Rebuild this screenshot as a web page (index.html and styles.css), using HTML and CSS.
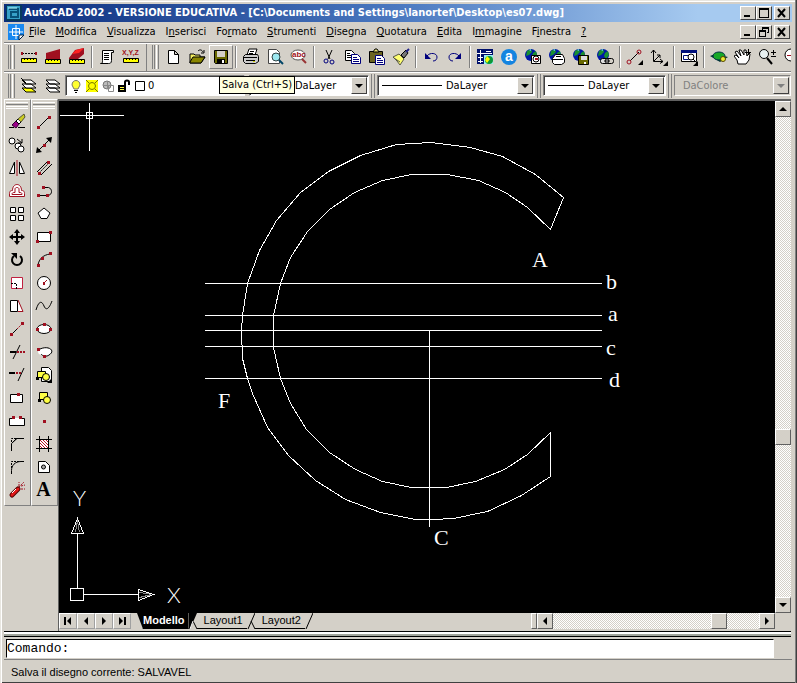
FILE: index.html
```html
<!DOCTYPE html>
<html lang="it">
<head>
<meta charset="utf-8">
<title>AutoCAD 2002</title>
<link rel="stylesheet" href="styles.css">
</head>
<body>
<svg class="defs" aria-hidden="true">
  <symbol id="globe" viewBox="0 0 18 18"><circle cx="7" cy="7" r="6" fill="#0018a8"/><path d="M3 3l4-2 1 3-3 3-3 1zM9 5l3-2 1 4-3 4-2-3z" fill="#189030"/><path d="M5 2l2-1v2z" fill="#6cf"/></symbol>
  <symbol id="arrow" viewBox="0 0 8 8"><path d="M0 2h8L4 6z"/></symbol>
</svg>
<div class="window">
  <header class="titlebar">
    <svg class="appicon" viewBox="0 0 16 16"><path fill="#063a5c" d="M0 0h16v16H0z"/><path fill="#38a0c8" d="M1 1h13v13H1z"/><path d="M3 4h9v9M11 7H5v5h7" fill="none" stroke="#075078" stroke-width="2"/><path d="M2 3h9" stroke="#bff"/></svg>
    <h1>AutoCAD 2002 - VERSIONE EDUCATIVA - [C:\Documents and Settings\lanortef\Desktop\es07.dwg]</h1>
    <div class="winbtns">
      <button aria-label="Riduci a icona"><svg viewBox="0 0 12 10"><path d="M2 7h6v2H2z"/></svg></button>
      <button aria-label="Ingrandisci"><svg viewBox="0 0 12 10"><path d="M1 0h10v10H1zM2 2v7h8V2z" fill-rule="evenodd"/></svg></button>
      <button class="close" aria-label="Chiudi"><svg viewBox="0 0 12 10"><path class="x" d="M2 1l7 8M9 1L2 9"/></svg></button>
    </div>
  </header>

  <nav class="menubar">
    <svg class="docicon" viewBox="0 0 16 16"><path fill="#1888f0" d="M0 0h16v11l-5 5H0z"/><path d="M8 1v14M1 8h14M4.500 4.500h7v7h-7z" fill="none" stroke="#fff"/><path d="M11 16v-5h5z" fill="#fff" stroke="#024"/></svg>
    <button><u>F</u>ile</button><button><u>M</u>odifica</button><button><u>V</u>isualizza</button><button>I<u>n</u>serisci</button><button>Fo<u>r</u>mato</button><button><u>S</u>trumenti</button><button><u>D</u>isegna</button><button><u>Q</u>uotatura</button><button><u>E</u>dita</button><button>I<u>m</u>magine</button><button>F<u>i</u>nestra</button><button><u>?</u></button>
    <div class="winbtns">
      <button aria-label="Riduci disegno"><svg viewBox="0 0 12 10"><path d="M2 7h6v2H2z"/></svg></button>
      <button aria-label="Ripristina disegno"><svg viewBox="0 0 12 10"><path d="M4 0h7v6H9V5h1V2H5v1H4zM1 3h7v7H1zM2 5v4h5V5z" fill-rule="evenodd"/></svg></button>
      <button class="close" aria-label="Chiudi disegno"><svg viewBox="0 0 12 10"><path class="x" d="M2 1l7 8M9 1L2 9"/></svg></button>
    </div>
  </nav>

  <div class="row">
    <div class="bar">
      <i class="grip"></i>
      <button aria-label="Distanza"><svg viewBox="0 0 18 18"><path class="k dot" d="M2 5.500h14"/><path class="fr" d="M1 4h2v3H1zM15 4h2v3h-2z"/><path class="fy" d="M1.500 10.500h15v4h-15z"/><path class="k" d="M4.500 10v2M7.500 10v2M10.500 10v2M13.500 10v2"/></svg></button>
      <button aria-label="Area"><svg viewBox="0 0 18 18"><path class="fr" d="M2 5l14-4v10H2z"/><path class="fy" d="M1.500 11.500h15v4h-15z"/><path class="k" d="M4.500 11v2M7.500 11v2M10.500 11v2M13.500 11v2"/></svg></button>
      <button aria-label="Proprietà di massa"><svg viewBox="0 0 18 18"><path class="fr" d="M1 10l6-8 9-2v6l-6 5H1z"/><path fill="#f22" d="M4 6l4-4 8-2-5 5z"/><path class="fy" d="M1.500 11.500h15v4h-15z"/><path class="k" d="M4.500 11v2M7.500 11v2M10.500 11v2M13.500 11v2"/></svg></button>
      <i class="sep"></i>
      <button aria-label="Lista"><svg viewBox="0 0 18 18"><path class="fw" d="M4.500 2.500h11v2h-2v8c0 3-2 3-3 3h-8c2 0 2-1 2-3z"/><path class="k" d="M6 5.500h5M6 7.500h5M6 9.500h5M6 11.500h5"/></svg></button>
      <button aria-label="Identifica punto"><svg viewBox="0 0 18 18"><text x="0" y="7" class="xyz">X,Y,Z</text><path class="fy" d="M1.500 10.500h15v4h-15z"/><path class="k" d="M4.500 10v2M7.500 10v2M10.500 10v2M13.500 10v2"/></svg></button>
    </div>
    <div class="bar rest">
      <i class="grip"></i>
      <button aria-label="Nuovo"><svg viewBox="0 0 18 18"><path class="fw" d="M4.500 2.500h6l4 4v9h-10zM10.500 2.500v4h4"/></svg></button>
      <button aria-label="Apri"><svg viewBox="0 0 18 18"><path fill="#f4ee60" stroke="#000" d="M2 14V6h4l1 1h5v2h5l-4 6H2z"/><path fill="#8a8600" stroke="#000" d="M2 14l3-5h12l-4 6H2z"/><path class="k" d="M10 3c2-2 4-1 5 1M13 5h3V2"/></svg></button>
      <div class="tipwrap">
        <button class="active" aria-label="Salva" aria-describedby="tip"><svg viewBox="0 0 18 18"><path fill="#686800" stroke="#000" d="M2.500 2.500h13v13h-12l-1-1z"/><path fill="#d4d0c8" d="M5 3h8v6H5z"/><path fill="#000" d="M5 11h8v5H5z"/><path fill="#fff" d="M10 12h2v3h-2z"/></svg></button>
        <div class="tip" id="tip" role="tooltip">Salva (Ctrl+S)</div>
      </div>
      <i class="sep"></i>
      <button aria-label="Stampa"><svg viewBox="0 0 18 18"><path class="fw" d="M5 7l2-6h8l-2 6z"/><path fill="#ccc" stroke="#000" d="M1.500 8.500l2-2h12l1 2v5l-3 2h-10l-2-2z"/><path class="k" d="M2 9.500h13M4 12.500h9M8 3.500h4M7 5.500h4"/><path d="M11 13h2v1h-2z" fill="#cc0"/></svg></button>
      <button aria-label="Anteprima di stampa"><svg viewBox="0 0 18 18"><path fill="#fff" stroke="#444" d="M2.500 1.500h8l3 3v11h-11z"/><circle cx="10" cy="9" r="4" fill="#9de8f0" stroke="#344"/><path d="M13 12l4 4" stroke="#046" stroke-width="2"/></svg></button>
      <button aria-label="Trova e sostituisci"><svg viewBox="0 0 18 18"><ellipse cx="8" cy="7" rx="7" ry="5" fill="#fff" stroke="#555"/><text x="2" y="9" class="abc">abc</text><path d="M12 11l4 4" stroke="#933" stroke-width="2"/></svg></button>
      <i class="sep"></i>
      <button aria-label="Taglia"><svg viewBox="0 0 18 18"><path class="k" d="M6 2l4 9M12 2l-4 9"/><circle class="n" cx="6" cy="13" r="2"/><circle class="n" cx="12" cy="14" r="2"/></svg></button>
      <button aria-label="Copia"><svg viewBox="0 0 18 18"><path class="fw" d="M1.500 2.500h6l3 3v7h-9z"/><path fill="#fff" stroke="#00007c" d="M7.500 6.500h6l3 3v6h-9z"/><path class="k" d="M3 5.500h3M3 7.500h4M3 9.500h4"/><path class="n" d="M9 9.500h4M9 11.500h6M9 13.500h6"/></svg></button>
      <button aria-label="Incolla"><svg viewBox="0 0 18 18"><path fill="#6c6420" stroke="#000" d="M1.500 3.500h13v11h-13z"/><path fill="#e8e070" stroke="#000" d="M5 4l2-3h2l2 3z"/><path fill="#fff" stroke="#00007c" d="M7.500 7.500h6l3 3v6h-9z"/><path class="n" d="M9 10.500h4M9 12.500h6M9 14.500h6"/></svg></button>
      <button aria-label="Corrispondenza proprietà"><svg viewBox="0 0 18 18"><path fill="#ffff70" stroke="#554" d="M1 9l6-3 5 5-4 6-3-4z"/><path d="M2 10l6 4" stroke="#554"/><path d="M9 7l3 3 4-5-2-3z" fill="#777" stroke="#000"/><path d="M14 4l3-3" stroke="#228" stroke-width="2"/></svg></button>
      <i class="sep"></i>
      <button aria-label="Annulla"><svg viewBox="0 0 18 18"><path class="n" d="M5 8c3-4 10-3 10 1 0 2-1 4-4 4"/><path fill="#00007c" d="M3 5v6h6z"/></svg></button>
      <button aria-label="Ripristina"><svg viewBox="0 0 18 18"><path class="n" d="M13 8C10 4 3 5 3 9c0 2 1 4 4 4"/><path fill="#00007c" d="M15 5v6H9z"/></svg></button>
      <i class="sep"></i>
      <button aria-label="Oggi"><svg viewBox="0 0 18 18"><path fill="#00106c" d="M1 1h16v6H1zM1 1h7v15H1z"/><path d="M1 5.500h15M4.500 2v13M10 3.500h5M2 9.500h5M2 13.500h5" stroke="#fff" fill="none"/><path fill="#9cf0f8" d="M8 7h9v9H8z"/><circle cx="13" cy="12" r="4" fill="#0a9838"/><path fill="#ff0" d="M11 8l3 3-3 4-2-3z"/></svg></button>
      <button aria-label="Autodesk Point A"><svg viewBox="0 0 18 18"><circle cx="9" cy="9" r="8" fill="#1484e0"/><text x="5" y="13" class="pa">a</text></svg></button>
      <button aria-label="Meet Now"><svg viewBox="0 0 18 18"><use href="#globe"/><path class="fw" d="M7.500 7.500h9v8h-9z"/><circle class="k" cx="12" cy="11" r="3"/><path class="fr" d="M11 10h3v2h-3z"/></svg></button>
      <button aria-label="Pubblica sul Web"><svg viewBox="0 0 18 18"><use href="#globe"/><path fill="#fff" stroke="#000" d="M4.500 10.500l3-4h7l2 4v4l-3 2h-7l-2-2zM5 11.500h10M8 8.500h5"/></svg></button>
      <button aria-label="eTransmit"><svg viewBox="0 0 18 18"><use href="#globe"/><path fill="#686800" stroke="#000" d="M6.500 7.500h10v9h-10z"/><path fill="#ddd" d="M9 8h6v4H9z"/><path fill="#fff" d="M12 14h2v2h-2z"/></svg></button>
      <button aria-label="Inserisci collegamento"><svg viewBox="0 0 18 18"><use href="#globe"/><rect x="4.500" y="10.500" width="8" height="5" rx="2" fill="#ddd" stroke="#000"/><rect x="9.500" y="10.500" width="8" height="5" rx="2" fill="none" stroke="#000"/><path class="k" d="M8 13h6"/></svg></button>
      <i class="sep"></i>
      <button aria-label="Punto di riferimento temporaneo"><svg viewBox="0 0 18 18"><path class="k" d="M4 13l9-9"/><circle class="r" cx="3" cy="14" r="2"/><circle class="r" cx="13" cy="4" r="2"/><path d="M17 12v5h-5z"/></svg></button>
      <button aria-label="UCS"><svg viewBox="0 0 18 18"><path class="k" d="M3.500 2v11.500H13M4 13l6-6M1 5l2.500-3L6 5M10 11l3 2.500-3 2M7 7h3v3"/><path d="M18 13v5h-5z"/></svg></button>
      <i class="sep"></i>
      <button aria-label="Viste"><svg viewBox="0 0 18 18"><path class="fw" d="M1.500 2.500h15v11h-15z"/><path fill="#00107c" d="M1 2h16v3H1z"/><path d="M3.500 7.500h5v4h-5z" fill="#fff" stroke="#00107c"/><circle cx="11" cy="9" r="3" fill="#fff" stroke="#000"/><path class="k" d="M13 11l4 4"/><path d="M18 13v5h-5z"/></svg></button>
      <i class="sep"></i>
      <button aria-label="Orbita 3D"><svg viewBox="0 0 18 18"><path fill="#033" d="M0 8l5-2 13 3-8 5z"/><ellipse cx="9" cy="8" rx="6" ry="4" fill="#18a828" stroke="#034"/><circle cx="13" cy="11" r="2.500" fill="#ee3" stroke="#540"/></svg></button>
      <button aria-label="Pan in tempo reale"><svg viewBox="0 0 18 18"><path class="fw" d="M4 16l-1-4-3-4 2-1 3 3-4-6 2-1 4 5-2-6h2l3 5V2h2l1 6 2-3 1 1-1 6-3 4z"/><path class="k" d="M14.500 1v6M11 4.500h6"/></svg></button>
      <button aria-label="Zoom in tempo reale"><svg viewBox="0 0 18 18"><circle cx="6" cy="6" r="4.500" fill="#e8f0f0" stroke="#000"/><path d="M9 10l5 6" stroke="#000" stroke-width="2"/><path class="k" d="M15.500 2v5M13 4.500h5M13 8.500h5"/></svg></button>
      <button aria-label="Zoom finestra"><svg viewBox="0 0 18 18"><circle cx="9" cy="7" r="6" fill="#fff" stroke="#000"/><path class="r" d="M5 7.500h7"/><path d="M10 12l5 5" stroke="#000" stroke-width="2"/></svg></button>
    </div>
  </div>

  <div class="row props">
    <div class="bar">
      <i class="grip"></i>
      <button aria-label="Rendi corrente il layer"><svg viewBox="0 0 18 18"><path fill="#ff0" stroke="#000" d="M2 11h9l5 4H6z"/><path class="fw" d="M2 7h9l5 4H6zM2 3h9l5 4H6z"/><path d="M1 1l5 5" stroke="#000"/></svg></button>
      <button aria-label="Layer"><svg viewBox="0 0 18 18"><path class="fw" d="M2 11h9l5 4H6zM2 7h9l5 4H6zM2 3h9l5 4H6z"/></svg></button>
      <div class="combo layer">
        <select aria-label="Layer corrente"><option>0</option></select>
        <div class="deco">
          <svg viewBox="0 0 12 14"><path fill="#ffff30" stroke="#776" d="M4 10L2 6c0-6 8-6 8 0l-2 4z"/><path class="k" d="M4 11.500h4M5 13.500h2"/></svg>
          <svg viewBox="0 0 12 14"><path fill="#ff0" d="M0 1h12v12H0z"/><circle cx="6" cy="7" r="3.500" fill="#ff0" stroke="#770"/><path d="M0 1l3 3M12 1L9 4M0 13l3-3M12 13l-3-3" stroke="#770"/></svg>
          <svg viewBox="0 0 12 14"><circle cx="5" cy="6" r="4" fill="#bbb" stroke="#777"/><path d="M6.500 6.500h5v6h-5zM1 6.500h8M5.500 2v8" fill="none" stroke="#888"/></svg>
          <svg viewBox="0 0 12 14"><path d="M0 6h8v7H0z"/><path d="M2 8.500h4M2 10.500h4" stroke="#ff4"/><path d="M7 6V3c0-2 4-2 4 0v3" fill="none" stroke="#000" stroke-width="2"/></svg>
          <svg viewBox="0 0 12 14"><path class="fw" d="M1.500 2.500h9v9h-9z"/></svg>
        </div>
        <span class="drop"><svg><use href="#arrow"/></svg></span>
      </div>
      <div class="combo color">
        <select aria-label="Colore"><option>DaLayer</option></select>
        <span class="drop"><svg><use href="#arrow"/></svg></span>
      </div>
    </div>
    <i class="grip"></i>
    <div class="combo ltype">
      <select aria-label="Tipo di linea"><option>DaLayer</option></select>
      <div class="deco"><hr></div>
      <span class="drop"><svg><use href="#arrow"/></svg></span>
    </div>
    <i class="grip"></i>
    <div class="combo lweight">
      <select aria-label="Spessore di linea"><option>DaLayer</option></select>
      <div class="deco"><hr></div>
      <span class="drop"><svg><use href="#arrow"/></svg></span>
    </div>
    <i class="grip"></i>
    <div class="combo pstyle">
      <select aria-label="Stile di stampa" disabled><option>DaColore</option></select>
      <span class="drop"><svg><use href="#arrow"/></svg></span>
    </div>
  </div>

  <main class="main">
    <div class="side">
      <i class="hgrip"></i>
      <button aria-label="Cancella"><svg viewBox="0 0 18 18"><path class="k" d="M1 14.500h5M10 14.500h7"/><path fill="#908" stroke="#303" d="M4 12l4-4 3 3-3 4z"/><path fill="#fff" stroke="#000" d="M8 8l2-2 3 3-2 2z"/><path fill="#cc2" stroke="#553" d="M10 6l6-5 1 3-4 5z"/></svg></button>
      <button aria-label="Copia oggetto"><svg viewBox="0 0 18 18"><circle class="fw" cx="4" cy="5" r="3"/><circle class="fw" cx="10" cy="10" r="3"/><circle class="fw" cx="13" cy="13" r="3"/><path class="k" d="M9 3l5 4M14 3v4h-4"/></svg></button>
      <button aria-label="Specchio"><svg viewBox="0 0 18 18"><path class="fw" d="M6.500 3v11.500h-5zM11.500 3v11.500h5z"/><path class="r" d="M9 1v16"/></svg></button>
      <button aria-label="Offset"><svg viewBox="0 0 18 18"><path d="M1.500 14.500v-3c0-3 2-3 3-3 0-8 9-8 9 0 1 0 3 0 3 3v3z" fill="#fff" stroke="#a01020"/><path class="r" d="M4 12.500c0-2 1-2 3-2V7c0-2 4-2 4 0v3.500c2 0 3 0 3 2z"/></svg></button>
      <button aria-label="Serie"><svg viewBox="0 0 18 18"><path class="fw" d="M2.500 2.500h5v5h-5zM10.500 2.500h5v5h-5zM2.500 10.500h5v5h-5zM10.500 10.500h5v5h-5z"/></svg></button>
      <button aria-label="Sposta"><svg viewBox="0 0 18 18"><path d="M9 3v12M3 9h12" stroke="#000" stroke-width="2"/><path d="M9 1l3 4H6zM9 17l3-4H6zM1 9l4-3v6zM17 9l-4-3v6z"/></svg></button>
      <button aria-label="Ruota"><svg viewBox="0 0 18 18"><path d="M12 5a5 5 0 1 1-6 0" fill="none" stroke="#000" stroke-width="2"/><path d="M3 2h6v6z"/></svg></button>
      <button aria-label="Scala"><svg viewBox="0 0 18 18"><path fill="#fff" stroke="#c02040" d="M3.500 3.500h11v11h-11z"/><path class="k dot" d="M3 9.500h5.500v6"/></svg></button>
      <button aria-label="Stira"><svg viewBox="0 0 18 18"><path fill="#fff" d="M10 4l5 10h-5z"/><path class="r" d="M10 3l5 11.500h-5"/><path class="fw" d="M2.500 3.500h7v11h-7z"/></svg></button>
      <button aria-label="Allunga"><svg viewBox="0 0 18 18"><path class="k" d="M3 15l6-6"/><path class="r dot" d="M9 9l6-6"/><path class="fr" d="M2 13h3v3H2zM13 2h3v3h-3z"/></svg></button>
      <button aria-label="Taglia oggetto"><svg viewBox="0 0 18 18"><path d="M2 9h6" stroke="#000" stroke-width="2"/><path class="k" d="M12 2L5 16"/><path class="r dot" stroke-width="2" d="M9 9h8"/></svg></button>
      <button aria-label="Estendi"><svg viewBox="0 0 18 18"><path d="M1 7h6" stroke="#000" stroke-width="2"/><path class="k" d="M16 2l-6 13"/><path class="r dot" stroke-width="2" d="M8 7h5"/></svg></button>
      <button aria-label="Spezza in un punto"><svg viewBox="0 0 18 18"><path class="fw" d="M2.500 5.500h12v8h-12z"/><path class="fr" d="M9 4h3v3H9z"/></svg></button>
      <button aria-label="Spezza"><svg viewBox="0 0 18 18"><path fill="#fff" d="M2 6h14v8H2z"/><path class="k" d="M5 6.500H1.500v7h15v-7H13"/><path class="fr" d="M4 4h3v3H4zM11 4h3v3h-3z"/></svg></button>
      <button aria-label="Cima"><svg viewBox="0 0 18 18"><path class="k" d="M16 3.500H9l-5.500 5V16M4 8l5-5"/><path class="k dot" d="M3.500 7V3.500H9"/></svg></button>
      <button aria-label="Raccorda"><svg viewBox="0 0 18 18"><path class="k" d="M16 3.500h-3c-6 0-9.500 4-9.500 9V16"/><path class="k dot" d="M3.500 10V3.500H11"/></svg></button>
      <button aria-label="Esplodi"><svg viewBox="0 0 18 18"><path d="M4 14l6-6" stroke="#500" stroke-width="5" stroke-linecap="round"/><path d="M4 14l6-6" stroke="#e01818" stroke-width="3" stroke-linecap="round"/><path d="M4 12l4-4" stroke="#fff"/><path class="r dot" d="M11 6l5-5M11 5V1M13 8h4M13 5l4-1"/></svg></button>
    </div>
    <div class="side">
      <i class="hgrip"></i>
      <button aria-label="Linea"><svg viewBox="0 0 18 18"><path class="k" d="M4 14L14 4"/><path class="fr" d="M2 13h3v3H2zM13 3h3v3h-3z"/></svg></button>
      <button aria-label="Linea di costruzione"><svg viewBox="0 0 18 18"><path class="k" d="M3 15L15 3"/><path d="M1 17l1-6 5 5zM17 1l-1 6-5-5z"/><path class="fr" d="M8 8h3v3H8z"/></svg></button>
      <button aria-label="Multilinea"><svg viewBox="0 0 18 18"><path class="k" d="M2 13L13 2M6 16L17 5"/><path class="k dot" d="M4 14L15 3"/><path class="fr" d="M12 2h3v3h-3zM3 13h3v3H3z"/></svg></button>
      <button aria-label="Polilinea"><svg viewBox="0 0 18 18"><path class="k" d="M3 13.500h9c7 0 5-9 0-8H9"/><path class="fr" d="M2 12h3v3H2zM11 12h3v3h-3zM7 4h3v3H7z"/></svg></button>
      <button aria-label="Poligono"><svg viewBox="0 0 18 18"><path class="fw" d="M9 3l6 5-3 5.500H6L3 8z"/></svg></button>
      <button aria-label="Rettangolo"><svg viewBox="0 0 18 18"><path class="fw" d="M2.500 4.500h13v9h-13z"/><path class="fr" d="M1 12h3v3H1zM14 3h3v3h-3z"/></svg></button>
      <button aria-label="Arco"><svg viewBox="0 0 18 18"><path class="k" d="M3 14C4 8 8 4 15 3"/><path class="fr" d="M2 13h3v3H2zM6 6h3v3H6zM14 1h3v3h-3z"/></svg></button>
      <button aria-label="Cerchio"><svg viewBox="0 0 18 18"><circle class="fw" cx="9" cy="9" r="6.500"/><path class="r" d="M8 10l4-4"/><path class="fr" d="M8 8h2v3H8z"/></svg></button>
      <button aria-label="Spline"><svg viewBox="0 0 18 18"><path class="k" d="M1 13C4 3 7 4 9 9s5 3 8-5"/></svg></button>
      <button aria-label="Ellisse"><svg viewBox="0 0 18 18"><ellipse class="fw" cx="9" cy="9" rx="7" ry="4.500"/><path class="fr" d="M1 8h3v3H1zM14 8h3v3h-3zM8 3h3v3H8z"/></svg></button>
      <button aria-label="Arco ellittico"><svg viewBox="0 0 18 18"><ellipse fill="#fff" cx="10" cy="9" rx="7" ry="4"/><path class="k" d="M5 6c9-4 16 2 9 6-2 2-7 1-8-1"/><path class="fr" d="M2 5h3v3H2zM8 12h3v3H8z"/></svg></button>
      <button aria-label="Inserisci blocco"><svg viewBox="0 0 18 18"><path class="fw" d="M6.500 1.500h7l3 3v11h-10z"/><path fill="#ff4" stroke="#000" d="M2.500 5.500h8v6h-8z"/><circle cx="11" cy="11" r="3.500" fill="#ff4" stroke="#000"/><path d="M1 11h3v3H1zM17 12v5h-5z"/></svg></button>
      <button aria-label="Crea blocco"><svg viewBox="0 0 18 18"><path fill="#ff4" stroke="#000" d="M4.500 3.500h8v7h-8z"/><circle cx="12" cy="11" r="3.500" fill="#ff4" stroke="#000"/><path d="M3 10h3v3H3z"/></svg></button>
      <button aria-label="Punto"><svg viewBox="0 0 18 18"><path class="fr" d="M8 8h3v3H8z"/></svg></button>
      <button aria-label="Tratteggio"><svg viewBox="0 0 18 18"><path fill="#fff" d="M4 4h10v10H4z"/><path d="M4 10l4 4M4 7l7 7M4 4l10 10M7 4l7 7M10 4l4 4" stroke="#c01020"/><path class="k" d="M4.500 1v16M13.500 1v16M1 4.500h16M1 13.500h16"/></svg></button>
      <button aria-label="Regione"><svg viewBox="0 0 18 18"><path class="fw" d="M3.500 3.500h7l4 4v7h-11z"/><circle cx="8.500" cy="9" r="2" fill="#aaa" stroke="#000"/></svg></button>
      <button class="mtext" aria-label="Testo multilinea">A</button>
    </div>

    <section class="doc">
      <svg class="canvas" role="img" aria-label="Disegno">
        <g class="geom" transform="translate(.5 .5)">
          <path d="M504 96L476 73 443 55 411 46 371 41 337 43 301 54 269 70 241 91 217 119 200 149 188 182 183 214 182 229 183 257 188 277 193 292 208 326 229 354 256 379 286 398 321 411 356 418 373 418 394 417 428 410 462 394 491 375V331L468 353 445 368 416 380 387 386H352L323 380 296 368 270 351 247 328 231 302 221 277 214 246V214L221 182 231 156 248 130 270 108 295 91 323 79 352 73H388L419 79 446 91 468 106 491 128Z"/>
          <path d="M145 182H542M145 214H542M145 229H542M145 245H542M145 277H542M370 229V425"/>
          <path d="M0 14H64M30 1V49M27 11h6v6h-6z"/>
          <path d="M11 487h13v12H11zM18 487V432M24 493H79M12 432h12l-6-15zM79 488v11l15-6z"/>
          <path class="faint" d="M16 431l2-12M20 431l-2-12M80 491l12 2M80 496l12-3"/>
        </g>
        <g class="labels">
          <text x="473" y="166">A</text><text x="547" y="188">b</text><text x="549" y="220">a</text><text x="547" y="254">c</text><text x="550" y="286">d</text><text x="159" y="307">F</text><text x="375" y="444">C</text>
        </g>
        <g class="axes"><text x="14" y="405">Y</text><text x="108" y="502">X</text></g>
      </svg>
      <div class="vscroll">
        <button aria-label="Scorri su"><svg viewBox="0 0 8 8"><path d="M0 6h8L4 2z"/></svg></button>
        <i class="track long"></i><i class="thumb"></i><i class="track short"></i>
        <button aria-label="Scorri giù"><svg viewBox="0 0 8 8"><path d="M0 2h8L4 6z"/></svg></button>
      </div>
      <div class="tabs">
        <div class="tabnav">
          <button aria-label="Primo"><svg viewBox="0 0 8 8"><path d="M0 0h2v8H0zM7 0v8L3 4z"/></svg></button>
          <button aria-label="Precedente"><svg viewBox="0 0 8 8"><path d="M6 0v8L2 4z"/></svg></button>
          <button aria-label="Successivo"><svg viewBox="0 0 8 8"><path d="M2 0v8l4-4z"/></svg></button>
          <button aria-label="Ultimo"><svg viewBox="0 0 8 8"><path d="M6 0h2v8H6zM1 0v8l4-4z"/></svg></button>
        </div>
        <button class="tab on">Modello</button>
        <svg class="slash" viewBox="0 0 8 16"><path fill="#000" d="M0 0h8L1 16H0z"/><path d="M4 8l4 8" stroke="#000" fill="none"/><path d="M4 8l-3 8" stroke="#fff"/></svg>
        <button class="tab">Layout1</button>
        <svg class="slash" viewBox="0 0 8 16"><path d="M8 0L1 16M4 8l4 8" stroke="#000" fill="none"/></svg>
        <button class="tab">Layout2</button>
        <svg class="slash" viewBox="0 0 8 16"><path d="M8 0L1 16" stroke="#000" fill="none"/></svg>
      </div>
      <div class="hscroll">
        <i class="split"></i>
        <button aria-label="Scorri a sinistra"><svg viewBox="0 0 8 8"><path d="M6 0v8L2 4z"/></svg></button>
        <i class="track wide"></i><i class="thumb"></i><i class="track narrow"></i>
        <button aria-label="Scorri a destra"><svg viewBox="0 0 8 8"><path d="M2 0v8l4-4z"/></svg></button>
      </div>
    </section>
  </main>

  <div class="splitter"></div>
  <div class="command"><label for="cmd">Comando:</label><input id="cmd" type="text" autocomplete="off"></div>
  <footer class="status">Salva il disegno corrente: SALVAVEL</footer>
</div>
</body>
</html>
```
FILE: styles.css
```css
* { box-sizing: border-box; }
body {
  margin: 0;
  background: #d4d0c8;
  color: #000;
  font: 11px/14px "DejaVu Sans Condensed", "DejaVu Sans", sans-serif;
}
button, select, input { font: inherit; color: inherit; border: 0; margin: 0; padding: 0; background: none; border-radius: 0; outline: 0; }
svg { display: block; flex: none; }
i { display: block; flex: none; }
.defs { position: absolute; width: 0; height: 0; }

.window {
  display: flex;
  flex-direction: column;
  height: 100vh;
  padding: 4px 4px 2px;
  border-right: 1px solid #404040;
  box-shadow: inset 1px 0 #e8e6e0, inset 2px 0 #fff, inset -1px 0 #808080, inset 0 1px #e8e6e0, inset 0 2px #fff, inset 0 -1px #404040;
  overflow: hidden;
}

/* icon paint */
.k { fill: none; stroke: #000; }
.r { fill: none; stroke: #a01020; }
.n { fill: none; stroke: #00007c; }
.dot { stroke-dasharray: 2 1; }
.fr { fill: #a01020; }
.fw { fill: #fff; stroke: #000; }
.fy { fill: #ff0; stroke: #000; }
.xyz { font: bold 7px "Liberation Sans", sans-serif; fill: #a01020; }
.abc { font: bold 8px "Liberation Sans", sans-serif; fill: #a01020; }
.pa { font: bold 14px "Liberation Sans", sans-serif; fill: #fff; }

/* title and menu */
.titlebar {
  display: flex;
  align-items: center;
  flex: none;
  height: 18px;
  padding: 0 2px;
  background: linear-gradient(90deg, #0a2c7c, #4a78c0 50%, #a6caf0 88%);
}
.titlebar h1 {
  flex: 1;
  min-width: 0;
  margin: 0 0 0 2px;
  overflow: hidden;
  white-space: nowrap;
  color: #fff;
  font-size: 11px;
  line-height: 16px;
}
.appicon { width: 16px; height: 16px; }
.winbtns { display: flex; flex: none; margin-left: auto; }
.winbtns button {
  width: 16px;
  height: 14px;
  padding: 1px;
  background: #d4d0c8;
  border: 1px solid;
  border-color: #fff #404040 #404040 #fff;
}
.winbtns svg { width: 12px; height: 10px; }
.winbtns .close { margin-left: 2px; }
.x { fill: none; stroke: #000; stroke-width: 2; }
.menubar { display: flex; align-items: center; flex: none; height: 20px; padding: 0 2px; }
.menubar > button { margin-left: 10px; white-space: nowrap; }
.menubar > .docicon + button { margin-left: 5px; }
.docicon { width: 16px; height: 16px; margin-left: 2px; }

/* toolbars */
.row {
  display: flex;
  align-items: center;
  flex: none;
  height: 29px;
  margin-right: 1px;
  padding-left: 2px;
  border-top: 1px solid #808080;
  box-shadow: inset 0 1px #fff;
}
.props { height: 28px; }
.bar { display: flex; align-items: center; height: 27px; flex: none; }
.rest { flex: 1 1 0; min-width: 0; margin-left: 3px; padding-left: 3px; border-left: 1px solid #808080; clip-path: inset(0 0 -40px 0); }
.bar button { display: grid; place-items: center; flex: none; width: 24px; height: 24px; }
.bar button svg { width: 18px; height: 18px; }
.bar .active { border: 1px solid; border-color: #fff #808080 #808080 #fff; }
.grip {
  width: 7px;
  height: 24px;
  margin: 0 2px;
  border: solid;
  border-width: 0 1px;
  border-color: #fff #808080;
  background: linear-gradient(90deg, #d4d0c8 1px, #808080 1px 2px, #d4d0c8 2px 3px, #fff 3px 4px, #d4d0c8 4px);
}
.sep { width: 2px; height: 22px; margin: 0 2px; border-left: 1px solid #808080; border-right: 1px solid #fff; }
.tipwrap { position: relative; }
.tip {
  position: absolute;
  top: 31px;
  left: 10px;
  z-index: 5;
  padding: 1px 2px;
  border: 1px solid #000;
  background: #ffffe1;
  white-space: nowrap;
}

/* drop-downs */
.combo {
  display: grid;
  align-items: center;
  flex: none;
  height: 21px;
  border: 1px solid;
  border-color: #808080 #fff #fff #808080;
  box-shadow: inset 1px 1px #404040;
  background: #fff;
}
.combo > * { grid-area: 1 / 1; }
.combo select { appearance: none; width: 100%; height: 19px; padding-right: 18px; text-overflow: clip; }
.deco { display: flex; align-items: center; pointer-events: none; }
.drop {
  display: grid;
  place-items: center;
  justify-self: end;
  width: 16px;
  height: 17px;
  margin-right: 1px;
  border: 1px solid;
  border-color: #fff #404040 #404040 #fff;
  background: #d4d0c8;
  pointer-events: none;
}
.drop svg { width: 8px; height: 8px; }
hr { width: 60px; margin: 0 0 0 4px; border: 0; border-top: 1px solid #000; }
.layer { width: 180px; }
.layer .deco { gap: 4px; padding-left: 4px; }
.layer .deco svg { width: 12px; height: 14px; }
.layer select { padding-left: 82px; }
.color { width: 120px; margin-left: 4px; }
.color select { padding-left: 45px; }
.ltype { flex: 160 1 0; }
.ltype select { padding-left: 68px; }
.lweight { flex: 124 1 0; }
.lweight hr { width: 36px; }
.lweight select { padding-left: 44px; }
.pstyle { flex: 118 1 0; background: #d4d0c8; box-shadow: none; }
.pstyle select { padding-left: 8px; color: #808080; opacity: 1; }
.pstyle svg { fill: #808080; }
.props > .grip { width: 4px; margin: 0 2px; background: #d4d0c8; }

/* work area */
.main { display: flex; flex: 1; min-height: 0; }
.side {
  display: flex;
  flex-direction: column;
  align-items: center;
  align-self: flex-start;
  flex: none;
  width: 27px;
  padding: 2px 2px 4px 0;
  border: 1px solid;
  border-color: #fff #808080 #808080 #fff;
}
.hgrip { width: 22px; height: 7px; margin-bottom: 1px; border: solid; border-width: 1px 0; border-color: #fff #808080; background: linear-gradient(#d4d0c8 1px, #808080 1px 2px, #d4d0c8 2px 3px, #fff 3px 4px, #d4d0c8 4px); }
.side button { display: grid; place-items: center; width: 22px; height: 23px; }
.side svg { width: 18px; height: 18px; }
.side .mtext { font: bold 20px/23px "Liberation Serif", serif; }
.doc {
  display: grid;
  flex: 1;
  grid-template: minmax(0, 1fr) 18px / minmax(0, 1fr) 244px 16px;
  min-width: 0;
  margin-right: 1px;
  border-top: 2px solid #606060;
  border-left: 1px solid #606060;
}
.canvas { grid-column: 1 / 3; width: 100%; height: 100%; background: #000; }
.geom path { fill: none; stroke: #fff; shape-rendering: crispEdges; }
.geom .faint { stroke: #888; }
.labels text { fill: #fff; font: 22px "Liberation Serif", serif; }
.axes text { fill: #fff; font: 300 22px Lato, "Open Sans", sans-serif; }

.vscroll { display: flex; flex-direction: column; }
.hscroll { display: flex; height: 16px; }
.vscroll button, .hscroll button, .thumb, .split, .tabnav button {
  display: grid;
  place-items: center;
  flex: none;
  width: 16px;
  height: 16px;
  border: 1px solid;
  border-color: #fff #606060 #606060 #fff;
  background: #d4d0c8;
}
.vscroll svg, .hscroll svg { width: 8px; height: 8px; }
.hscroll .split { width: 6px; }
.track { background: repeating-conic-gradient(#fff 0 25%, #d4d0c8 0 50%) 0 0 / 2px 2px; }
.long { flex: 312 1 0; }
.short { flex: 152 1 0; }
.wide { flex: 158 1 0; }
.narrow { flex: 32 1 0; }

.tabs { display: flex; align-items: flex-start; white-space: nowrap; overflow: hidden; }
.tabnav { display: flex; flex: none; margin-right: 6px; }
.tabnav button { width: 18px; height: 16px; border-color: #fff #a0a0a0 #a0a0a0 #fff; }
.tabnav svg { width: 8px; height: 8px; }
.tab { flex: none; height: 16px; padding: 0 4px 0 7px; font: 11px/15px "Liberation Sans", sans-serif; border-bottom: 1px solid #000; }
.tab.on { padding: 0 4px 0 6px; background: #000; color: #fff; font-weight: bold; clip-path: polygon(0 0, 100% 0, 100% 100%, 6px 100%); }
.slash { width: 8px; height: 16px; }

/* command line and status */
.splitter { flex: none; height: 6px; margin-right: 1px; border: solid #000; border-width: 1px 0; background: linear-gradient(#fff 2px, #a0a49a 2px); }
.command {
  display: flex;
  align-items: center;
  flex: none;
  height: 19px;
  margin: 2px 18px 1px 2px;
  border: 1px solid;
  border-color: #000 #fff #fff #000;
  background: #fff;
  font: 13px/17px "Liberation Mono", monospace;
}
.command input { flex: 1; min-width: 0; }
.status {
  flex: none;
  height: 22px;
  padding: 5px 7px;
  border-top: 1px solid #808080;
  font: 11px/15px "Liberation Sans", sans-serif;
}
```
